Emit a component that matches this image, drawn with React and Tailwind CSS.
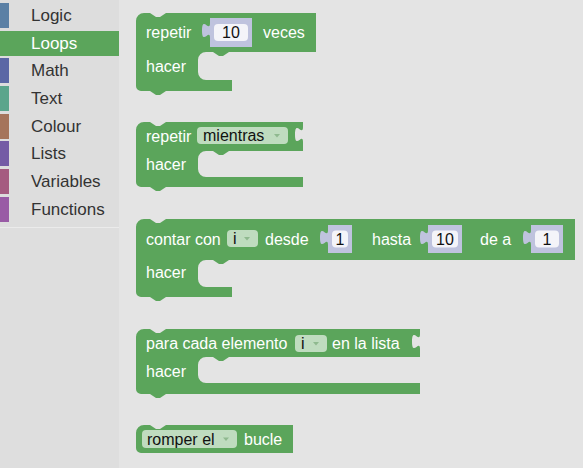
import React from 'react';

const GREEN = '#5ba55b';
const FONT = '"Liberation Sans", Arial, sans-serif';

const categories = [
  { name: 'Logic', strip: 'bg-[#5b80a5]' },
  { name: 'Loops', strip: 'bg-[#5ba55b]', selected: true },
  { name: 'Math', strip: 'bg-[#5b67a5]' },
  { name: 'Text', strip: 'bg-[#5ba58c]' },
  { name: 'Colour', strip: 'bg-[#a5745b]' },
  { name: 'Lists', strip: 'bg-[#745ba5]' },
  { name: 'Variables', strip: 'bg-[#a55b80]' },
  { name: 'Functions', strip: 'bg-[#995ba5]' },
];

// statement block path (C shape), geras-like
function cBlockPath({ x0, top, topW, ext, armBottom, gapLeft, gapBottom, botW, bottom }) {
  let d = `M ${x0} ${top + 8} a 8 8 0 0 1 8 -8 H ${x0 + 14} l 6 4 h 4 l 6 -4 H ${topW}`;
  if (ext) d += ` v 5 c 0 10 -8 -8 -8 7.5 s 8 -2.5 8 7.5`;
  d += ` V ${armBottom} H ${gapLeft + 31} l -6 4 h -4 l -6 -4 H ${gapLeft + 8}`;
  d += ` a 8 8 0 0 0 -8 8 V ${gapBottom - 8} a 8 8 0 0 0 8 8 H ${botW} V ${bottom}`;
  d += ` H ${x0 + 30} l -6 4 h -4 l -6 -4 H ${x0 + 5} a 5 5 0 0 1 -5 -5 Z`;
  return d;
}

function simplePath({ x0, top, right, bottom }) {
  return `M ${x0} ${top + 8} a 8 8 0 0 1 8 -8 H ${x0 + 14} l 6 4 h 4 l 6 -4 H ${right} V ${bottom} H ${x0 + 5} a 5 5 0 0 1 -5 -5 Z`;
}

function Label({ x, y, children, dark }) {
  return (
    <text x={x} y={y} fontSize="16" fontFamily={FONT} fill={dark ? '#111' : '#fff'} dominantBaseline="central">
      {children}
    </text>
  );
}

function NumberInput({ lx, rx, ty, by, value }) {
  const d = `M ${lx} ${ty} H ${rx} V ${by} H ${lx} V ${ty + 20} C ${lx} ${ty + 10} ${lx - 8} ${ty + 28} ${lx - 8} ${ty + 12.5} C ${lx - 8} ${ty - 3} ${lx} ${ty + 15} ${lx} ${ty + 5} Z`;
  const cy = (ty + by) / 2;
  return (
    <g>
      <path d={d} fill="#bfc3de" />
      <rect x={lx + 4} y={cy - 8.5} width={rx - lx - 8} height="17" rx="4" fill="#f4f4f9" />
      <text x={(lx + rx) / 2} y={cy} fontSize="16" fontFamily={FONT} fill="#111" textAnchor="middle" dominantBaseline="central">
        {value}
      </text>
    </g>
  );
}

function Dropdown({ x, w, y, h = 17, label, textX }) {
  const cy = y + h / 2;
  const ax = x + w - 11;
  return (
    <g>
      <rect x={x} y={y} width={w} height={h} rx="4" fill="#bfdcbf" />
      <Label x={textX ?? x + 6} y={cy} dark>
        {label}
      </Label>
      <path d={`M ${ax - 3} ${cy - 1.5} h 6 l -3 3.5 Z`} fill="#8fb98f" />
    </g>
  );
}

function Segment({ y0, h, children }) {
  return (
    <svg width="464" height={h} viewBox={`119 ${y0} 464 ${h}`} className="block shrink-0">
      {children}
    </svg>
  );
}

export default function App() {
  return (
    <div className="flex h-[468px] w-[583px] overflow-hidden bg-[#e4e4e4]" style={{ fontFamily: FONT }}>
      {/* Toolbox */}
      <div className="flex w-[119px] shrink-0 flex-col">
        <div className="flex flex-col gap-[2.7px] bg-[#dddddd] pt-[3px] pb-[5px]">
          {categories.map((c) => (
            <div
              key={c.name}
              className={`flex h-[25px] items-center ${c.selected ? 'bg-[#5ba55b] text-white' : 'text-[#333]'}`}
            >
              <div className={`h-full w-[9px] ${c.strip}`} />
              <span className="ml-[22px] text-[17px] leading-none">{c.name}</span>
            </div>
          ))}
        </div>
        <div className="flex-1 border-t border-[#ebebeb] bg-[#dedede]" />
      </div>

      {/* Flyout */}
      <div className="flex flex-col">
        <Segment y0={0} h={110}>
          <path
            d={cBlockPath({ x0: 136, top: 13, topW: 316, armBottom: 52, gapLeft: 198, gapBottom: 80, botW: 232, bottom: 91 })}
            fill={GREEN}
          />
          <Label x={146} y={32}>repetir</Label>
          <NumberInput lx={210} rx={252} ty={18} by={47} value="10" />
          <Label x={263} y={32}>veces</Label>
          <Label x={146} y={66}>hacer</Label>
        </Segment>

        <Segment y0={110} h={100}>
          <path
            d={cBlockPath({ x0: 136, top: 122, topW: 303, ext: true, armBottom: 151, gapLeft: 198, gapBottom: 177, botW: 303, bottom: 187 })}
            fill={GREEN}
          />
          <Label x={146} y={136}>repetir</Label>
          <Dropdown x={197} w={91} y={127} label="mientras" />
          <Label x={146} y={164}>hacer</Label>
        </Segment>

        <Segment y0={210} h={105}>
          <path
            d={cBlockPath({ x0: 136, top: 219, topW: 575, armBottom: 260, gapLeft: 198, gapBottom: 287, botW: 232, bottom: 297 })}
            fill={GREEN}
          />
          <Label x={146} y={239}>contar con</Label>
          <Dropdown x={227} w={31} y={230} label="i" textX={233} />
          <Label x={265} y={239}>desde</Label>
          <NumberInput lx={328} rx={352} ty={225} by={253} value="1" />
          <Label x={372} y={239}>hasta</Label>
          <NumberInput lx={428} rx={462} ty={225} by={253} value="10" />
          <Label x={480} y={239}>de a</Label>
          <NumberInput lx={531} rx={563} ty={225} by={253} value="1" />
          <Label x={146} y={272}>hacer</Label>
        </Segment>

        <Segment y0={315} h={100}>
          <path
            d={cBlockPath({ x0: 136, top: 329, topW: 420, ext: true, armBottom: 357, gapLeft: 198, gapBottom: 383, botW: 420, bottom: 394 })}
            fill={GREEN}
          />
          <Label x={146} y={343}>para cada elemento</Label>
          <Dropdown x={295} w={32} y={335} label="i" textX={301} />
          <Label x={332} y={343}>en la lista</Label>
          <Label x={146} y={371}>hacer</Label>
        </Segment>

        <Segment y0={415} h={53}>
          <path d={simplePath({ x0: 136, top: 425, right: 293, bottom: 453 })} fill={GREEN} />
          <Dropdown x={142} w={95} y={430} h={18} label="romper el" textX={147} />
          <Label x={244} y={439}>bucle</Label>
        </Segment>
      </div>
    </div>
  );
}
